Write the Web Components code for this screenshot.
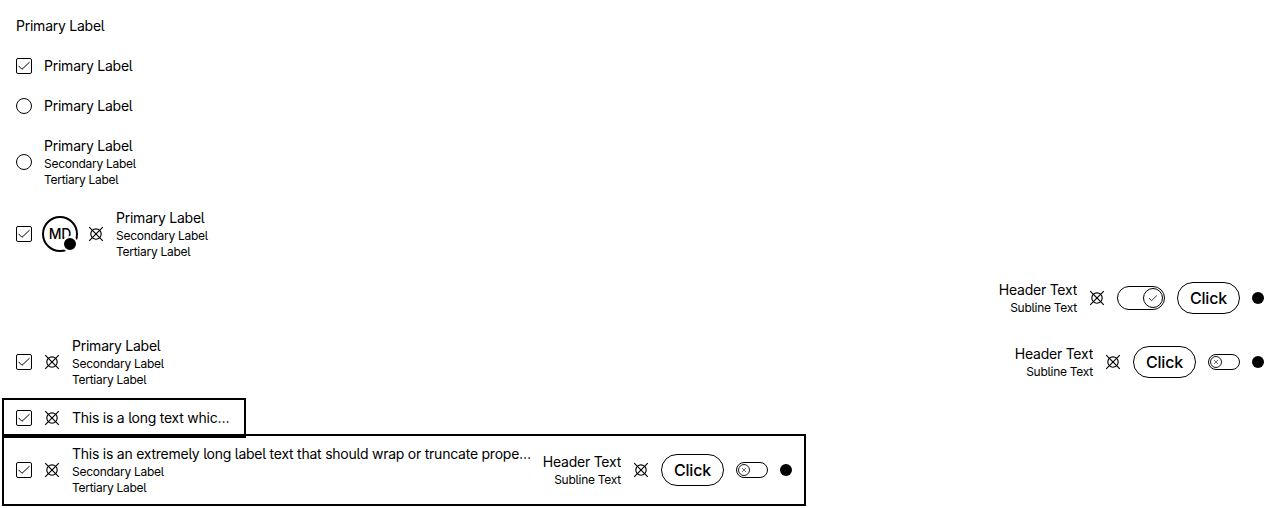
<!DOCTYPE html>
<html lang="en"><head><meta charset="utf-8"><title>List items</title>
<style>
html{overflow:hidden}
body{margin:0;background:#fff;color:#000;font-family:Inter,"Liberation Sans",sans-serif;padding:6px 0 4px}
</style></head><body>
<list-demo></list-demo>
<script>
const define=(name,html)=>{
  customElements.define(name,class extends HTMLElement{
    constructor(){super();const t=document.createElement('template');t.innerHTML=html;
      this.attachShadow({mode:'open'}).append(t.content.cloneNode(true));}
  });
};
define('x-check',`<style>:host{display:block;width:16px;height:16px;flex:none}svg{display:block}</style>
<svg width="16" height="16" fill="none" stroke="#000"><rect x=".5" y=".5" width="15" height="15" rx="1.5"/><path d="M2.5 7.8 6 11.3 13.6 4.1"/></svg>`);
define('x-radio',`<style>:host{display:block;box-sizing:border-box;width:16px;height:16px;flex:none;border:1px solid #000;border-radius:50%}</style>`);
define('x-icon',`<style>:host{display:block;width:16px;height:16px;flex:none}svg{display:block}</style>
<svg width="16" height="16" fill="none" stroke="#000"><circle cx="8" cy="8" r="5.2" stroke-width="1.15"/><path d="M1.2 1.2 14.8 14.8M14.8 1.2 1.2 14.8" stroke-width="1.15"/></svg>`);
define('x-dot',`<style>:host{display:block;width:12px;height:12px;flex:none;border-radius:50%;background:#000}</style>`);
define('x-avatar',`<style>:host{display:flex;position:relative;box-sizing:border-box;width:36px;height:36px;margin:-2px;flex:none;align-items:center;justify-content:center;border:2px solid #000;border-radius:50%;font-size:14px;font-weight:500;line-height:20px;letter-spacing:-.2px}
x-dot{position:absolute;right:-2px;bottom:-2px;border:2px solid #fff}</style><slot></slot><x-dot></x-dot>`);
define('x-button',`<style>:host{display:block;flex:none}button{display:block;box-sizing:border-box;width:63px;height:32px;padding:0;border:1px solid #000;border-radius:16px;background:#fff;color:#000;font:500 16px/24px Inter,"Liberation Sans",sans-serif;letter-spacing:-.18px}</style><button><slot></slot></button>`);
define('x-switch',`<style>:host{display:flex;box-sizing:border-box;width:48px;height:24px;padding:1px;flex:none;border:1px solid #000;border-radius:12px;justify-content:flex-end}
svg{display:block;width:20px;height:20px}.off{display:none}
:host([small]){width:32px;height:16px;justify-content:flex-start}:host([small]) .on{display:none}:host([small]) .off{display:block;width:12px;height:12px}</style>
<svg class="on" fill="none" stroke="#000"><circle cx="10" cy="10" r="9.5"/><path d="m6 10.1 2.6 2.5 5.3-5.1" stroke-width=".8"/></svg>
<svg class="off" fill="none" stroke="#000"><circle cx="6" cy="6" r="5.5" stroke-width=".9"/><path d="m4 4 4 4m0-4L4 8" stroke-width=".6"/></svg>`);
define('x-text',`<style>:host{display:block;min-width:0;font-size:12px;line-height:16px;letter-spacing:-.27px;font-feature-settings:"cv05"}
.top{font-size:14px;line-height:20px;letter-spacing:-.24px;white-space:nowrap;overflow:hidden}
:host([end]){text-align:right;flex:none}</style>
<div class="top"><slot name="top"></slot></div><slot></slot>`);
define('x-item',`<style>:host{display:flex;box-sizing:border-box;align-items:center;justify-content:space-between;gap:12px;padding:10px 12px;margin:0 4px}
.side{display:flex;align-items:center;gap:12px;min-width:0}.end{flex:none}
:host([boxed]){padding:8px 12px;outline:2px solid #000}
:host([narrow]){margin-top:2px;width:240px}:host([wide]){width:800px}
:host([narrow]) .end{display:none}</style>
<div class="side"><slot></slot></div><div class="side end"><slot name="end"></slot></div>`);
define('x-end',`<style>:host{display:flex;align-items:center;gap:12px}</style><slot></slot>`);
const label='<x-text><span slot="top">Primary Label</span></x-text>';
const more='<div>Secondary Label</div><div>Tertiary Label</div>';
const triple='<x-text><span slot="top">Primary Label</span>'+more+'</x-text>';
const head='<x-text end><span slot="top">Header Text</span><div>Subline Text</div></x-text><x-icon></x-icon>';
const tail='<x-end slot="end">'+head+'<x-button>Click</x-button><x-switch small></x-switch><x-dot></x-dot></x-end>';
define('list-demo',`<style>:host{display:block}</style>
<x-item>${label}</x-item>
<x-item><x-check></x-check>${label}</x-item>
<x-item><x-radio></x-radio>${label}</x-item>
<x-item><x-radio></x-radio>${triple}</x-item>
<x-item><x-check></x-check><x-avatar>MD</x-avatar><x-icon></x-icon>${triple}</x-item>
<x-item><x-end slot="end">${head}<x-switch></x-switch><x-button>Click</x-button><x-dot></x-dot></x-end></x-item>
<x-item><x-check></x-check><x-icon></x-icon>${triple}${tail}</x-item>
<x-item boxed narrow><x-check></x-check><x-icon></x-icon><x-text><span slot="top">This is a long text whic…</span></x-text></x-item>
<x-item boxed wide><x-check></x-check><x-icon></x-icon><x-text><span slot="top">This is an extremely long label text that should wrap or truncate prope…</span>${more}</x-text>${tail}</x-item>`);
</script></body></html>
